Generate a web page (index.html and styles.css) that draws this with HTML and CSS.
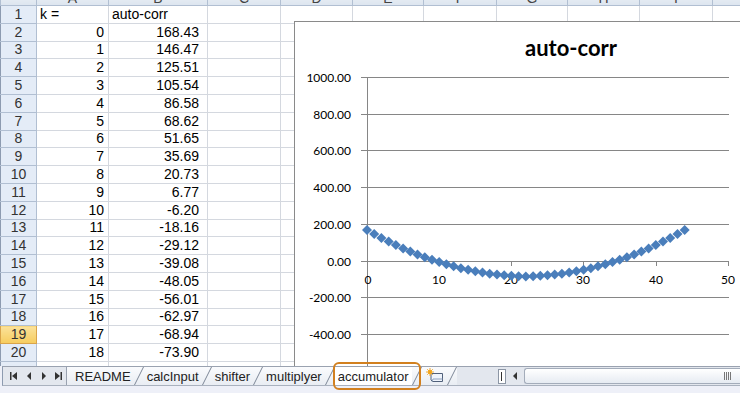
FILE: index.html
```html
<!DOCTYPE html>
<html lang="en">

<head>
    <meta charset="UTF-8">
    <title>accumulator - auto-corr</title>
    <link rel="stylesheet" href="styles.css">
</head>

<body>
    <div class="sheet">
        <div class="grid-wrap">
            <table class="cells">
                <colgroup>
                    <col class="c-head"><col class="c-a"><col class="c-b"><col class="c-c"><col class="c-d"><col class="c-e">
                    <col class="c-f"><col class="c-g"><col class="c-h"><col class="c-i"><col class="c-j">
                </colgroup>
                <tr class="colhead">
                    <th></th><th>A</th><th>B</th><th>C</th><th>D</th><th>E</th><th>F</th><th>G</th><th>H</th><th>I</th><th>J</th>
                </tr>
                <tr><th>1</th><td>k =</td><td>auto-corr</td><td></td><td></td><td></td><td></td><td></td><td></td><td></td><td></td></tr>
                <tr><th>2</th><td class="num">0</td><td class="num val">168.43</td><td></td><td></td><td></td><td></td><td></td><td></td><td></td><td></td></tr>
                <tr><th>3</th><td class="num">1</td><td class="num val">146.47</td><td></td><td></td><td></td><td></td><td></td><td></td><td></td><td></td></tr>
                <tr><th>4</th><td class="num">2</td><td class="num val">125.51</td><td></td><td></td><td></td><td></td><td></td><td></td><td></td><td></td></tr>
                <tr><th>5</th><td class="num">3</td><td class="num val">105.54</td><td></td><td></td><td></td><td></td><td></td><td></td><td></td><td></td></tr>
                <tr><th>6</th><td class="num">4</td><td class="num val">86.58</td><td></td><td></td><td></td><td></td><td></td><td></td><td></td><td></td></tr>
                <tr><th>7</th><td class="num">5</td><td class="num val">68.62</td><td></td><td></td><td></td><td></td><td></td><td></td><td></td><td></td></tr>
                <tr><th>8</th><td class="num">6</td><td class="num val">51.65</td><td></td><td></td><td></td><td></td><td></td><td></td><td></td><td></td></tr>
                <tr><th>9</th><td class="num">7</td><td class="num val">35.69</td><td></td><td></td><td></td><td></td><td></td><td></td><td></td><td></td></tr>
                <tr><th>10</th><td class="num">8</td><td class="num val">20.73</td><td></td><td></td><td></td><td></td><td></td><td></td><td></td><td></td></tr>
                <tr><th>11</th><td class="num">9</td><td class="num val">6.77</td><td></td><td></td><td></td><td></td><td></td><td></td><td></td><td></td></tr>
                <tr><th>12</th><td class="num">10</td><td class="num val">-6.20</td><td></td><td></td><td></td><td></td><td></td><td></td><td></td><td></td></tr>
                <tr><th>13</th><td class="num">11</td><td class="num val">-18.16</td><td></td><td></td><td></td><td></td><td></td><td></td><td></td><td></td></tr>
                <tr><th>14</th><td class="num">12</td><td class="num val">-29.12</td><td></td><td></td><td></td><td></td><td></td><td></td><td></td><td></td></tr>
                <tr><th>15</th><td class="num">13</td><td class="num val">-39.08</td><td></td><td></td><td></td><td></td><td></td><td></td><td></td><td></td></tr>
                <tr><th>16</th><td class="num">14</td><td class="num val">-48.05</td><td></td><td></td><td></td><td></td><td></td><td></td><td></td><td></td></tr>
                <tr><th>17</th><td class="num">15</td><td class="num val">-56.01</td><td></td><td></td><td></td><td></td><td></td><td></td><td></td><td></td></tr>
                <tr><th>18</th><td class="num">16</td><td class="num val">-62.97</td><td></td><td></td><td></td><td></td><td></td><td></td><td></td><td></td></tr>
                <tr><th class="selected">19</th><td class="num">17</td><td class="num val">-68.94</td><td></td><td></td><td></td><td></td><td></td><td></td><td></td><td></td></tr>
                <tr><th>20</th><td class="num">18</td><td class="num val">-73.90</td><td></td><td></td><td></td><td></td><td></td><td></td><td></td><td></td></tr>
                <tr><th></th><td></td><td></td><td></td><td></td><td></td><td></td><td></td><td></td><td></td><td></td></tr>
            </table>

            <!-- embedded chart object floats over the cells -->
            <div class="chart">
                <svg class="plot" width="458" height="360" viewBox="295 22 458 360">
                    <defs>
                        <marker id="dia" viewBox="-6 -6 12 12" markerWidth="12" markerHeight="12" markerUnits="userSpaceOnUse" refX="0" refY="0">
                            <path d="M0 -5L5 0 0 5-5 0z" fill="#4a7ebb" />
                        </marker>
                    </defs>
                    <text class="chart-title" x="571" y="56" text-anchor="middle">auto-corr</text>
                    <path class="gridline" d="M361 77.5H729M361 114.5H729M361 150.5H729M361 187.5H729M361 224.5H729M361 297.5H729M361 334.5H729M361 371.5H729" />
                    <path class="gridline" d="M367.5 77V380M361 261.5H728.5" />
                    <path class="gridline" d="M367.5 261V266M439.5 261V266M511.5 261V266M583.5 261V266M656.5 261V266M728.5 261V266" />
                    <g class="axis-label" text-anchor="end">
                        <text x="351" y="82">1000.00</text>
                        <text x="351" y="119">800.00</text>
                        <text x="351" y="155">600.00</text>
                        <text x="351" y="192">400.00</text>
                        <text x="351" y="229">200.00</text>
                        <text x="351" y="266">0.00</text>
                        <text x="351" y="302">-200.00</text>
                        <text x="351" y="339">-400.00</text>
                    </g>
                    <g class="axis-label" text-anchor="middle">
                        <text x="368" y="284">0</text>
                        <text x="439" y="284">10</text>
                        <text x="511" y="284">20</text>
                        <text x="583" y="284">30</text>
                        <text x="656" y="284">40</text>
                        <text x="728" y="284">50</text>
                    </g>
                    <polyline class="series" points="367,230.1 374.2,234.1 381.4,238 388.7,241.6 395.9,245.1 403.1,248.4 410.3,251.5 417.5,254.5 424.8,257.2 432,259.8 439.2,262.1 446.4,264.3 453.6,266.3 460.9,268.2 468.1,269.8 475.3,271.3 482.5,272.6 489.7,273.7 497,274.6 504.2,275.3 511.4,275.8 518.6,276.2 525.8,276.4 533.1,276.2 540.3,275.8 547.5,275.3 554.7,274.6 561.9,273.7 569.2,272.6 576.4,271.3 583.6,269.8 590.8,268.2 598,266.3 605.3,264.3 612.5,262.1 619.7,259.8 626.9,257.2 634.1,254.5 641.4,251.5 648.6,248.4 655.8,245.1 663,241.6 670.2,238 677.5,234.1 684.7,230.1" />
                </svg>
            </div>
        </div>

        <div class="tabbar">
            <svg class="nav" width="63" height="18" viewBox="0 0 63 18">
                <path d="M7 5h1.5v8H7z M14 5v8l-5-4z M28 5v8l-4-4z M39 5v8l4-4z M52 5v8l5-4z M57.5 5H59v8h-1.5z" />
            </svg>
            <div class="tabs">
                <div class="tab first">README</div>
                <svg class="slant" width="10" height="18"><path d="M0.5 18L9.5 0" /></svg>
                <div class="tab">calcInput</div>
                <svg class="slant" width="10" height="18"><path d="M0.5 18L9.5 0" /></svg>
                <div class="tab">shifter</div>
                <svg class="slant" width="10" height="18"><path d="M0.5 18L9.5 0" /></svg>
                <div class="tab">multiplyer</div>
                <svg class="slant" width="10" height="18"><path d="M0.5 18L9.5 0" /></svg>
                <div class="tab active">accumulator</div>
                <svg class="slant" width="10" height="18"><path d="M0.5 18L9.5 0" /></svg>
                <div class="tab newsheet">
                    <svg width="20" height="16" viewBox="0 0 20 16">
                        <path d="M6 5.5h11.5v8h-10l-1.5-1.5z" fill="#eef3fb" stroke="#50607a" />
                        <path d="M7 13.5l1-2.5h9.5" fill="none" stroke="#8ea0bc" />
                        <circle cx="5" cy="4" r="2.2" fill="#f6b51e" />
                        <path d="M5 0v8M1 4h8M2.2 1.2l5.6 5.6M7.8 1.2l-5.6 5.6" stroke="#f0a020" stroke-width="0.9" />
                    </svg>
                </div>
                <svg class="slant" width="10" height="18"><path d="M0.5 18L9.5 0" /></svg>
            </div>
            <div class="spacer"></div>
            <div class="splitbox"><span></span></div>
            <svg class="scroll-arrow" width="12" height="18"><path d="M8 5v8l-4-4z" /></svg>
            <div class="hscroll">
                <svg class="grip" width="9" height="8"><path d="M0.5 0v8M2.5 0v8M4.5 0v8M6.5 0v8" /></svg>
            </div>
        </div>
        <div class="status"></div>

        <div class="tab-highlight"></div>
    </div>
</body>

</html>
```

FILE: styles.css
```css
body {
    margin: 0;
    padding: 0;
    background-color: #eef0f8;
    font-family: "Liberation Sans", Arial, sans-serif;
    overflow: hidden;
}

.sheet {
    position: relative;
    width: 740px;
    height: 393px;
    display: flex;
    flex-direction: column;
}

.grid-wrap {
    position: relative;
    height: 366px;
    overflow: hidden;
    background-color: #fff;
}

/* ---------- cells ---------- */

.cells {
    border-collapse: collapse;
    table-layout: fixed;
    width: 784px;
    margin-top: -17px;
    font-size: 14px;
}

.c-head { width: 36px; }
.c-a { width: 72px; }
.c-b { width: 99px; }
.c-c { width: 73px; }
.c-d { width: 72px; }
.c-e { width: 71px; }
.c-f { width: 73px; }
.c-g { width: 71px; }
.c-h { width: 72px; }
.c-i { width: 73px; }
.c-j { width: 72px; }

.cells tr {
    height: 17.8px;
}

.cells td {
    padding: 0 3px;
    border: 1px solid #d4d8df;
    line-height: 15px;
    white-space: nowrap;
    overflow: hidden;
    color: #000;
}

.cells td.num {
    text-align: right;
    padding-right: 4px;
}

.cells td.val {
    padding-right: 8px;
}

.cells th {
    padding: 0;
    font-weight: normal;
    line-height: 15px;
    color: #333;
    background-color: #e4ecf7;
    border: 1px solid #b1bfd2;
    border-left: 1px solid #8d9bb0;
}

.cells th.selected {
    background: linear-gradient(#fbe29a, #f6cc5e);
    border-color: #d9a44a;
}

.cells tr.colhead {
    height: 22px;
}

.cells .colhead th {
    vertical-align: bottom;
    line-height: 14px;
    color: #444;
    background: linear-gradient(#f5f8fc, #dde5ef);
    border-color: #b1bfd2;
}

/* ---------- chart ---------- */

.chart {
    position: absolute;
    left: 294px;
    top: 21px;
    width: 470px;
    height: 370px;
    border: 1px solid #8a8a8a;
    background-color: #fff;
}

.plot {
    display: block;
}

.chart-title {
    font-family: Lato, "Open Sans", sans-serif;
    font-weight: 700;
    font-size: 22px;
    fill: #000;
}

.gridline {
    fill: none;
    stroke: #868686;
    stroke-width: 1;
}

.axis-label {
    font-family: Lato, "Liberation Sans", sans-serif;
    font-size: 12px;
    fill: #000;
}

.series {
    fill: none;
    stroke: none;
    marker-start: url(#dia);
    marker-mid: url(#dia);
    marker-end: url(#dia);
}

/* ---------- sheet tabs ---------- */

.tabbar {
    display: flex;
    align-items: stretch;
    height: 18px;
    margin-left: 2px;
    border-top: 1px solid #9aa2b0;
    border-left: 1px solid #8d9bb0;
    border-bottom: 1px solid #a9b1be;
    background-color: #e3e7ee;
    font-size: 13px;
}

.nav {
    flex: none;
    fill: #333;
}

.tabs {
    display: flex;
    align-items: stretch;
    border-left: 1px solid #9aa2b0;
}

.tab {
    display: flex;
    align-items: center;
    padding: 0 3px;
    color: #222;
    background: linear-gradient(#fafbfd, #e9edf3);
}

.tab.first {
    padding-left: 8px;
}

.tab.active {
    background: #fff;
}

.tab.newsheet {
    padding: 0 2px 0 3px;
}

.slant {
    flex: none;
    background: linear-gradient(#fafbfd, #e9edf3);
}

.slant path {
    stroke: #7d8797;
    stroke-width: 1;
    fill: none;
}

.spacer {
    width: 41px;
}

.splitbox {
    width: 6px;
    margin: 2px 0 1px;
    border: 1px solid #8c96a5;
    background-color: #fff;
    display: flex;
    justify-content: center;
    align-items: center;
}

.splitbox span {
    width: 1px;
    height: 9px;
    background-color: #333;
}

.scroll-arrow {
    flex: none;
    fill: #333;
    margin-left: 3px;
}

.hscroll {
    flex: 1;
    margin: 1px 0 1px 3px;
    border: 1px solid #a3acba;
    border-right: none;
    border-radius: 3px 0 0 3px;
    background: linear-gradient(#ffffff, #e6ebf2);
    display: flex;
    justify-content: flex-end;
    align-items: center;
    padding-right: 7px;
}

.grip path {
    stroke: #777;
    stroke-width: 1;
}

.status {
    flex: 1;
    background-color: #eef0f8;
}

.tab-highlight {
    position: absolute;
    left: 333px;
    top: 362px;
    width: 88px;
    height: 28px;
    box-sizing: border-box;
    border: 2px solid #d2801f;
    border-radius: 6px;
}
```
